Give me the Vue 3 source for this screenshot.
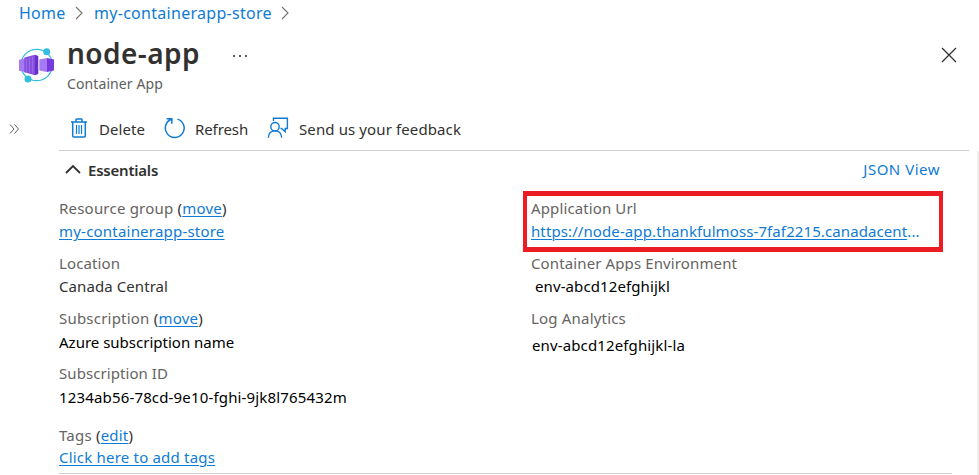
<script setup>
const left = [
  { key: 'group', label: 'Resource group', action: 'move', value: 'my-containerapp-store', link: true },
  { key: 'location', label: 'Location', value: 'Canada Central', soft: true },
  { key: 'subscription', label: 'Subscription', action: 'move', value: 'Azure subscription name' },
  { key: 'subid', label: 'Subscription ID', value: '1234ab56-78cd-9e10-fghi-9jk8l765432m' },
  { key: 'tags', label: 'Tags', action: 'edit', value: 'Click here to add tags', link: true },
]
const right = [
  { key: 'url', label: 'Application Url', value: 'https://node-app.thankfulmoss-7faf2215.canadacent', link: true, more: true },
  { key: 'env', label: 'Container Apps Environment', value: 'env-abcd12efghijkl' },
  { key: 'logs', label: 'Log Analytics', value: 'env-abcd12efghijkl-la' },
]
</script>

<template>
  <div class="page">
    <nav class="crumbs">
      <a class="home">Home</a>
      <svg class="sep" width="8" height="14" viewBox="0 0 8 14"><path d="M1 1l6 6-6 6" /></svg>
      <a class="store">my-containerapp-store</a>
      <svg class="sep" width="8" height="14" viewBox="0 0 8 14"><path d="M1 1l6 6-6 6" /></svg>
    </nav>

    <header class="head">
      <svg class="logo" width="36" height="36" viewBox="0 0 36 36">
        <circle cx="17.700" cy="18" r="15.700" fill="none" stroke="#32bedd" stroke-width="1.300" />
        <path d="M4 11.500L17 7l3 2.500 8-.500v18l-8-.500-3 3L4 25z" fill="#fff" />
        <path d="M0 12.700l7-1.500v14l-7-1.500z" fill="#a67af4" />
        <path d="M5.300 10.500L16 7.700v20.600l-10.700-3z" fill="#8450dd" />
        <path d="M16 7.700l3.300 1.300v18l-3.300 1.300z" fill="#6a2fcb" />
        <path d="M7.500 11.500v13M10.500 10.700v14.800M13.500 10v16.500" stroke="#a67af4" stroke-width=".6" />
        <path d="M20.300 12.500l7.700-1.600v14.200l-7.700-1.600z" fill="#a67af4" />
        <path d="M28 10.900l7 1.500v11.200l-7 1.500z" fill="#773adc" />
        <circle cx="27.700" cy="4.800" r="3.500" fill="#32bedd" />
        <circle cx="9" cy="32" r="3.500" fill="#32bedd" />
      </svg>
      <div class="titles">
        <h1>node-app</h1>
        <p>Container App</p>
      </div>
      <div class="dots"><i></i><i></i><i></i></div>
      <svg class="close" width="16" height="16" viewBox="0 0 16 16"><path d="M1 1l14 14M15 1L1 15" /></svg>
    </header>

    <div class="bar">
      <svg class="expand" width="11" height="10" viewBox="0 0 11 10"><path d="M1 .5L5 5l-4 4.500M5.500.5l4 4.500-4 4.500" /></svg>
      <div class="tools">
        <button class="tool delete">
          <svg width="18" height="20" viewBox="0 0 18 20">
            <path d="M1 4h16M6 4V1.700Q6 1 6.700 1h4.600q.7 0 .7.7V4M2.700 4v14q0 1 1 1h10.600q1 0 1-1V4" stroke-width="1.500" />
            <path d="M6.500 7v9M9 7v9M11.500 7v9" stroke-width="1.200" />
          </svg>
          <span>Delete</span>
        </button>
        <button class="tool refresh">
          <svg width="22" height="22" viewBox="0 0 22 22">
            <path d="M13.500 2.100A9.400 9.400 0 1 1 7.400 2.300M2.600 1.800h5.200v5" stroke-width="1.500" />
          </svg>
          <span>Refresh</span>
        </button>
        <button class="tool feedback">
          <svg width="22" height="22" viewBox="0 0 22 22">
            <path d="M6.500 4V1.200h13.900v10.300h-2.200v3.200l-3.600-3.200h-1.100" stroke-width="1.400" />
            <circle cx="8" cy="9.700" r="4.200" stroke-width="1.400" />
            <path d="M1.300 20.700c.3-4.200 3-6.800 6.700-6.800s6.400 2.600 6.700 6.800" stroke-width="1.400" />
          </svg>
          <span>Send us your feedback</span>
        </button>
      </div>
    </div>

    <main class="body">
      <div class="section">
        <svg width="16" height="10" viewBox="0 0 16 10"><path d="M1 9l7-7 7 7" /></svg>
        <h2>Essentials</h2>
        <a class="json">JSON View</a>
      </div>
      <div class="grid">
        <dl v-for="(col, n) in [left, right]" :key="n">
          <div v-for="f in col" :key="f.key" class="field" :class="f.key">
            <dt>{{ f.label }}<template v-if="f.action">{{ ' ' }}<span class="paren">(</span><a>{{ f.action }}</a><span class="paren">)</span></template></dt>
            <dd :class="{ soft: f.soft }"><a v-if="f.link">{{ f.value }}</a><template v-else>{{ f.value }}</template><span v-if="f.more" class="more">...</span></dd>
          </div>
        </dl>
      </div>
    </main>
  </div>
</template>

<style>
body { background: #fff; }
</style>

<style scoped>
.page { height: 475px; overflow: hidden; display: flex; flex-direction: column; font: 15px/20px "Noto Sans", sans-serif; color: #323130; background: #fff; }
h1, h2, p, dl, dd { margin: 0; }
a { color: #0f7bd4; }
svg { fill: none; flex: none; }

.crumbs { display: flex; align-items: center; height: 26px; padding-left: 19px; font-size: 16px; }
.crumbs a { line-height: 26px; }
.home { width: 56px; letter-spacing: .25px; }
.sep { stroke: #77736f; stroke-width: 1.1; }
.store { width: 187px; margin-left: 11px; letter-spacing: .29px; }

.head { display: flex; height: 84px; }
.logo { margin: 21px 12px 0 19px; }
.titles { width: 165px; }
h1 { margin-top: 6px; font-size: 28px; line-height: 43px; font-weight: 600; letter-spacing: .44px; }
.titles p { margin-top: -1px; font-size: 14px; line-height: 20px; color: #605e5c; letter-spacing: .1px; }
.dots { display: flex; gap: 4px; margin: 29px 0 0 1px; height: 2px; }
.dots i { width: 2px; height: 2px; background: #605e5c; }
.close { margin: 21px 22px 0 auto; stroke: #323130; stroke-width: 1.3; }

.bar { display: flex; align-items: center; height: 41px; }
.expand { margin: -3px 39px 0 9px; stroke: #605e5c; stroke-width: 1; }
.tools { display: flex; align-items: center; flex: none; box-sizing: border-box; width: 910px; height: 41px; padding: 0 0 3px 11px; border-bottom: 1px solid #d2d0ce; }
.tool { display: flex; align-items: center; padding: 0; border: 0; background: none; font: inherit; color: #323130; }
.tool svg { margin-top: -2px; stroke: #0f7bd4; }
.delete { gap: 11px; width: 94px; letter-spacing: .06px; }
.refresh { gap: 9px; width: 103px; letter-spacing: -.1px; }
.feedback { gap: 10px; letter-spacing: .11px; }

.body { flex: 1; display: flex; flex-direction: column; box-sizing: border-box; width: 979px; padding: 0 25px 1px 59px; border-right: 2px solid #f1f0ef; }
.section { display: flex; align-items: center; flex: none; height: 38px; }
.section svg { margin: -2px 7px 0 6px; stroke: #323130; stroke-width: 1.800; }
h2 { font-size: 15px; line-height: 20px; font-weight: 600; letter-spacing: -.22px; }
.json { margin: -3px 12px 0 auto; letter-spacing: .5px; }

.grid { flex: none; display: grid; grid-template-columns: 464px 1fr; height: 284px; border-bottom: 1px solid #d2d0ce; }
dl { padding-top: 9px; min-width: 0; }
.field { height: 55px; white-space: nowrap; }
dt { color: #666462; letter-spacing: .12px; }
dt .paren { color: #323130; }
dt a, dd a { text-decoration: underline; text-decoration-thickness: 1px; text-underline-offset: 2px; }
dd { margin-top: 3px; color: #000; letter-spacing: .12px; }
dd.soft { color: #323130; letter-spacing: .08px; }
.group dt, .subscription dt, .tags dt { letter-spacing: .21px; }
.group dd { letter-spacing: .21px; }
.subscription dd { margin-top: 4px; letter-spacing: 0; }
.subid { height: 62px; }
.subid dt { letter-spacing: .07px; }
.subid dd { margin-top: 4px; letter-spacing: .16px; }
.tags dd { margin-top: 2px; letter-spacing: .2px; }
.url { box-sizing: border-box; width: 420px; height: 61px; margin: -7px 0 1px; padding: 2px 4px; border: 5px solid #ec1c24; border-right-width: 4px; border-left-width: 4px; }
.url dd { letter-spacing: .1px; }
.env, .logs { padding-left: 7px; }
.env dt { height: 18px; overflow: hidden; }
.env dt, .logs dt { padding-left: 1px; }
.env dd { margin-top: 5px; padding-left: 5px; letter-spacing: .1px; }
.logs dt { letter-spacing: .19px; }
.logs dd { margin-top: 7px; padding-left: 2px; letter-spacing: .13px; }
.more { color: #0f7bd4; }
</style>
